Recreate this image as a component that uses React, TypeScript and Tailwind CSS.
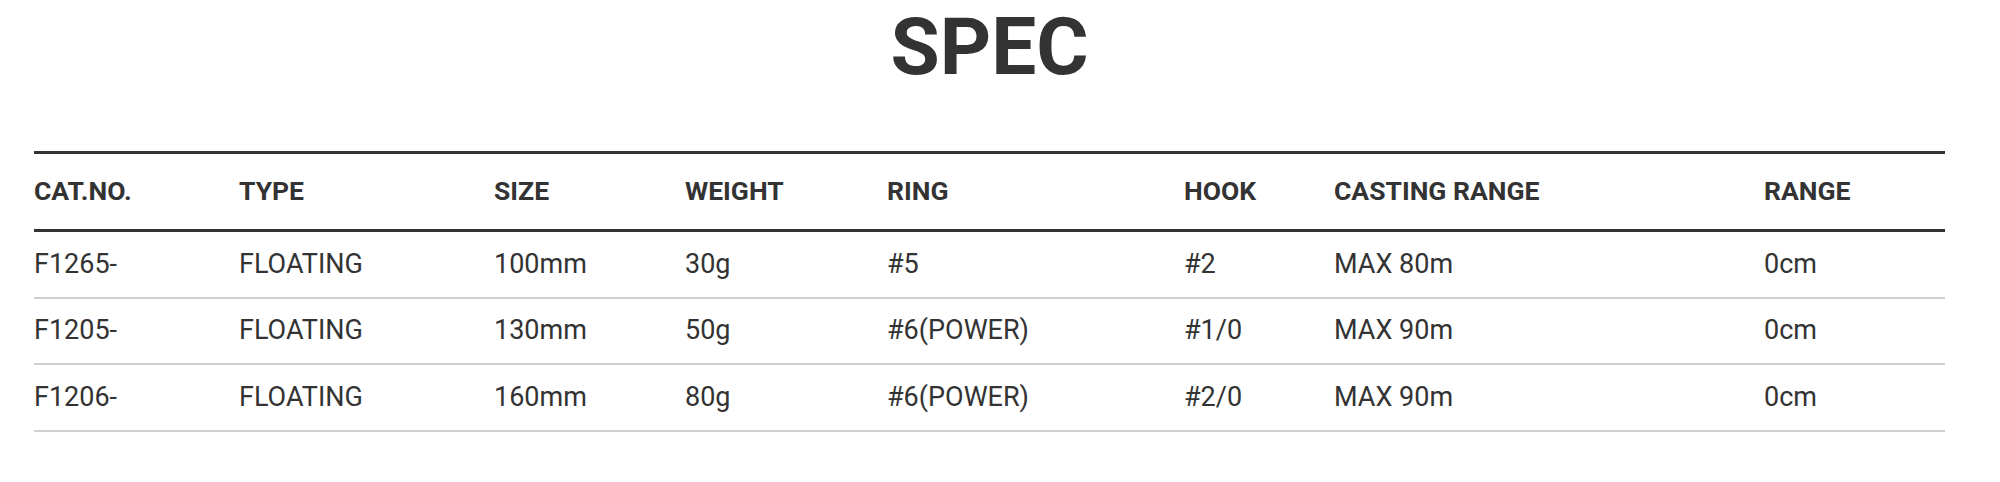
const columns = ["CAT.NO.", "TYPE", "SIZE", "WEIGHT", "RING", "HOOK", "CASTING RANGE", "RANGE"];

const rows = [
  ["F1265-", "FLOATING", "100mm", "30g", "#5", "#2", "MAX 80m", "0cm"],
  ["F1205-", "FLOATING", "130mm", "50g", "#6(POWER)", "#1/0", "MAX 90m", "0cm"],
  ["F1206-", "FLOATING", "160mm", "80g", "#6(POWER)", "#2/0", "MAX 90m", "0cm"],
];

const gridCols = "grid grid-cols-[205px_255px_191px_202px_297px_150px_430px_181px]";

export default function App() {
  return (
    <div className="min-h-[482px] bg-white font-['Roboto',sans-serif] text-[#333]">
      <div className="ml-[34px] w-[1911px] pt-[7px]">
        <h1 className="text-center text-[80px] font-bold leading-none">SPEC</h1>
        <div className="mt-[64px] border-t-[3px] border-[#333]">
          <div className={`${gridCols} h-[78px] items-center border-b-[3px] border-[#333]`}>
            {columns.map((c) => (
              <div key={c} className="text-[26.5px] font-bold leading-none">
                {c}
              </div>
            ))}
          </div>
          {rows.map((r) => (
            <div key={r[0]} className={`${gridCols} h-[66.5px] items-center border-b-2 border-[#cfcfcf]`}>
              {r.map((v, i) => (
                <div key={i} className="text-[27px] leading-none">
                  {v}
                </div>
              ))}
            </div>
          ))}
        </div>
      </div>
    </div>
  );
}
